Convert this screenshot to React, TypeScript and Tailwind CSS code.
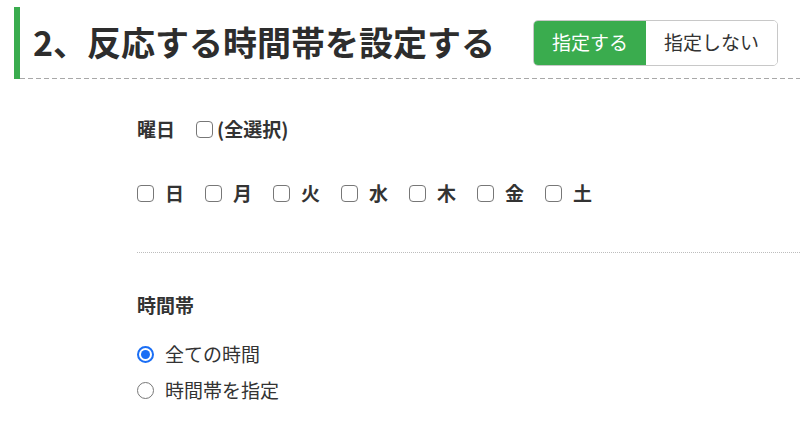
import { useState } from "react";

const days = ["日", "月", "火", "水", "木", "金", "土"];

const Checkbox = () => (
  <span className="block h-[17px] w-[17px] shrink-0 rounded-[4px] border border-[#777] bg-white" />
);

const Radio = ({ checked }: { checked: boolean }) =>
  checked ? (
    <span className="flex h-[17px] w-[17px] shrink-0 items-center justify-center rounded-full border-2 border-[#1a6ef5] bg-white">
      <span className="h-[9px] w-[9px] rounded-full bg-[#1a6ef5]" />
    </span>
  ) : (
    <span className="block h-[17px] w-[17px] shrink-0 rounded-full border border-[#777] bg-white" />
  );

const App = () => {
  const [enabled, setEnabled] = useState(true);
  const [allTime, setAllTime] = useState(true);

  return (
    <div className="h-[432px] w-[800px] overflow-hidden bg-white font-['Noto_Sans_CJK_JP',sans-serif] text-[#333]">
      <div className="ml-[14px] mt-[7px] flex">
        <div className="w-[6px] bg-[#3aac4e]" />
        <div className="flex-1">
          <div className="flex h-[71px] items-center justify-between pl-[13px] pr-[22px]">
            <h1 className="-mt-[2px] text-[34px] font-bold leading-none text-[#2d2d2d]">
              2、反応する時間帯を設定する
            </h1>
            <div className="flex h-[46px] overflow-hidden rounded-[5px] border border-[#c8c8c8] text-[19px]">
              <button
                className={`px-[18px] ${enabled ? "bg-[#3aac4e] text-white" : "bg-white text-[#333]"}`}
                onClick={() => setEnabled(true)}
              >
                指定する
              </button>
              <button
                className={`px-[18px] ${!enabled ? "bg-[#3aac4e] text-white" : "bg-white text-[#333]"}`}
                onClick={() => setEnabled(false)}
              >
                指定しない
              </button>
            </div>
          </div>
          <div className="h-px bg-[repeating-linear-gradient(to_right,#a8a8a8_0_5px,transparent_5px_8px)]" />
        </div>
      </div>

      <div className="pl-[137px]">
        <div className="mt-[38px] flex h-6 items-center text-[19px] font-bold">
          <span>曜日</span>
          <span className="ml-[21px] flex items-center gap-[4px]">
            <Checkbox />
            <span>(全選択)</span>
          </span>
        </div>

        <div className="mt-[40px] flex h-6 items-center gap-[21px] text-[19px] font-bold">
          {days.map((d) => (
            <span key={d} className="flex items-center gap-[11px]">
              <Checkbox />
              <span>{d}</span>
            </span>
          ))}
        </div>

        <div className="mt-[47px] border-t border-dotted border-[#bdbdbd]" />

        <div className="mt-[40px] flex h-6 items-center text-[19px] font-bold">
          時間帯
        </div>

        <div className="mt-[25px] flex flex-col gap-[12px] text-[19px]">
          <label
            className="flex h-6 items-center gap-[11px]"
            onClick={() => setAllTime(true)}
          >
            <Radio checked={allTime} />
            <span>全ての時間</span>
          </label>
          <label
            className="flex h-6 items-center gap-[11px]"
            onClick={() => setAllTime(false)}
          >
            <Radio checked={!allTime} />
            <span>時間帯を指定</span>
          </label>
        </div>
      </div>
    </div>
  );
};

export default App;
